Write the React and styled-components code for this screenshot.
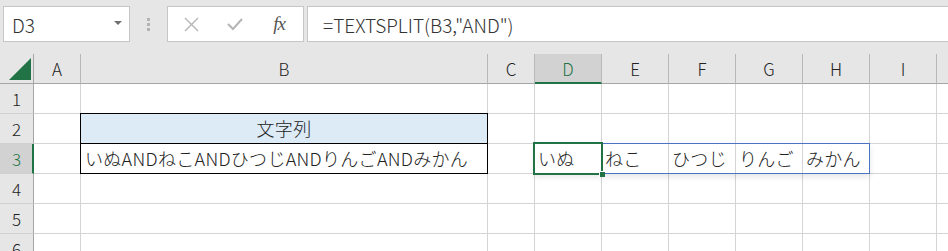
import React from 'react';
import styled, { createGlobalStyle } from 'styled-components';

const GREEN = '#217346';

const GlobalStyle = createGlobalStyle`
  html, body {
    margin: 0;
    padding: 0;
    background: #ffffff;
  }
  body {
    width: 948px;
    height: 251px;
    overflow: hidden;
    font-family: "Noto Sans CJK JP", "Noto Sans", sans-serif;
    font-weight: 300;
    color: #222222;
  }
`;

// Formula bar
const Toolbar = styled.div`
  display: flex;
  align-items: flex-start;
  box-sizing: border-box;
  height: 54px;
  padding: 6px 0 0 3px;
  background: #e6e6e6;
`;

const Box = styled.div`
  box-sizing: border-box;
  height: 36px;
  background: #ffffff;
  border: 1px solid #c6c6c6;
  display: flex;
  align-items: center;
`;

const NameBox = styled(Box)`
  width: 127px;
  padding: 0 7px 0 8px;
  justify-content: space-between;
  font-size: 19px;
  color: #333333;
`;

const DropArrow = styled.span`
  width: 0;
  height: 0;
  border-left: 4px solid transparent;
  border-right: 4px solid transparent;
  border-top: 4px solid #707070;
  margin-top: -2px;
`;

const Grip = styled.div`
  width: 37px;
  height: 36px;
  display: flex;
  flex-direction: column;
  align-items: center;
  justify-content: center;
  gap: 2px;
  & > span {
    width: 3px;
    height: 3px;
    background: #b3b3b3;
  }
`;

const FxBox = styled(Box)`
  width: 137px;
  padding: 0 0 0 6px;
`;

const IconSlot = styled.div`
  width: ${p => p.$w}px;
  display: flex;
  align-items: center;
  justify-content: center;
`;

const FxLabel = styled.span`
  font-family: "Liberation Serif", "DejaVu Serif", serif;
  font-style: italic;
  font-weight: 400;
  font-size: 19px;
  color: #555555;
  letter-spacing: -1px;
`;

const FormulaBox = styled(Box)`
  flex: 1;
  margin-left: 3px;
  padding-left: 15px;
  font-size: 19px;
  color: #333333;
  border-right: none;
`;

// Sheet grid: every item is placed on its row/column explicitly
const Sheet = styled.div`
  display: grid;
  grid-template-columns: 34px 47px 407px 47px repeat(7, 67px);
  grid-auto-rows: 30px;
  background: #ffffff;
`;

const Placed = styled.div`
  box-sizing: border-box;
  grid-row: ${p => p.$r};
  grid-column: ${p => p.$c};
`;

const Corner = styled(Placed)`
  background: #e6e6e6;
  border-right: 1px solid #a6a6a6;
  border-bottom: 1px solid #a6a6a6;
  display: flex;
  align-items: flex-end;
  justify-content: flex-end;
  padding: 0 2px 3px 0;
`;

const ColHead = styled(Placed)`
  background: ${p => (p.$active ? '#d2d2d2' : '#e6e6e6')};
  color: ${p => (p.$active ? GREEN : '#222222')};
  border-right: 1px solid #b8b8b8;
  border-bottom: ${p => (p.$active ? `2px solid ${GREEN}` : '1px solid #a6a6a6')};
  display: flex;
  align-items: center;
  justify-content: center;
  font-size: 17px;
  padding-top: ${p => (p.$active ? 1 : 0)}px;
`;

const RowHead = styled(Placed)`
  background: ${p => (p.$active ? '#d2d2d2' : '#e6e6e6')};
  color: ${p => (p.$active ? GREEN : '#222222')};
  border-right: ${p => (p.$active ? `2px solid ${GREEN}` : '1px solid #a6a6a6')};
  border-bottom: 1px solid #d0d0d0;
  display: flex;
  align-items: center;
  justify-content: center;
  font-size: 17px;
  padding-left: ${p => (p.$active ? 1 : 0)}px;
`;

const Cell = styled(Placed)`
  border-right: 1px solid #d4d4d4;
  border-bottom: 1px solid #d4d4d4;
  display: flex;
  align-items: center;
  justify-content: ${p => (p.$center ? 'center' : 'flex-start')};
  padding: 0 0 1px 3px;
  font-size: 18px;
  letter-spacing: 0.3px;
  white-space: nowrap;
  color: #222222;
  background: ${p => p.$fill || 'transparent'};
`;

const FramedCell = styled(Cell)`
  border-right-color: #000000;
  border-bottom-color: #000000;
  box-shadow: ${p => (p.$top ? '-1px 0 0 #000000, 0 -1px 0 #000000, -1px -1px 0 #000000' : '-1px 0 0 #000000')};
  padding-left: ${p => (p.$center ? 0 : 4)}px;
`;

const SpillFrame = styled(Placed)`
  margin: -1px 0 0 -1px;
  border: 1px solid #4a74c2;
  box-shadow: 0 3px 6px rgba(0, 0, 0, 0.1);
  pointer-events: none;
  z-index: 2;
`;

const Selection = styled(Placed)`
  margin: -2px -1px -1px -2px;
  border: 2px solid ${GREEN};
  position: relative;
  pointer-events: none;
  z-index: 3;
`;

const FillHandle = styled.span`
  position: absolute;
  right: -4px;
  bottom: -4px;
  width: 5px;
  height: 5px;
  background: ${GREEN};
  border: 1px solid #ffffff;
  border-width: 1px 0 0 1px;
`;

const COLUMNS = ['A', 'B', 'C', 'D', 'E', 'F', 'G', 'H', 'I', 'J'];
const ROWS = [1, 2, 3, 4, 5, 6];
const SPILL = ['いぬ', 'ねこ', 'ひつじ', 'りんご', 'みかん'];

const CancelIcon = () => (
  <svg width="15" height="15" viewBox="0 0 15 15">
    <path d="M1 1 L14 14 M14 1 L1 14" stroke="#b5b5b5" strokeWidth="1.4" fill="none" />
  </svg>
);

const CheckIcon = () => (
  <svg width="18" height="15" viewBox="0 0 18 15">
    <path d="M2 7 L7 12 L16 2" stroke="#b5b5b5" strokeWidth="2" fill="none" />
  </svg>
);

const CornerTriangle = () => (
  <svg width="22" height="22" viewBox="0 0 22 22">
    <polygon points="0,22 22,0 22,22" fill={GREEN} />
  </svg>
);

function renderCell(col, ci, row) {
  const pos = { key: `${col}${row}`, $r: row + 1, $c: ci + 2 };
  if (col === 'B' && row === 2) {
    return (
      <FramedCell {...pos} $top $center $fill="#ddebf7">
        文字列
      </FramedCell>
    );
  }
  if (col === 'B' && row === 3) {
    return <FramedCell {...pos}>いぬANDねこANDひつじANDりんごANDみかん</FramedCell>;
  }
  const idx = ci - 3;
  if (row === 3 && idx >= 0 && idx < SPILL.length) {
    return <Cell {...pos}>{SPILL[idx]}</Cell>;
  }
  return <Cell {...pos} />;
}

export default function App() {
  return (
    <>
      <GlobalStyle />
      <Toolbar>
        <NameBox>
          <span>D3</span>
          <DropArrow />
        </NameBox>
        <Grip>
          <span />
          <span />
          <span />
        </Grip>
        <FxBox>
          <IconSlot $w={34}>
            <CancelIcon />
          </IconSlot>
          <IconSlot $w={54}>
            <CheckIcon />
          </IconSlot>
          <IconSlot $w={34}>
            <FxLabel>fx</FxLabel>
          </IconSlot>
        </FxBox>
        <FormulaBox>=TEXTSPLIT(B3,"AND")</FormulaBox>
      </Toolbar>
      <Sheet>
        <Corner $r={1} $c={1}>
          <CornerTriangle />
        </Corner>
        {COLUMNS.map((c, ci) => (
          <ColHead key={c} $r={1} $c={ci + 2} $active={c === 'D'}>
            {c}
          </ColHead>
        ))}
        {ROWS.map(r => (
          <React.Fragment key={r}>
            <RowHead $r={r + 1} $c={1} $active={r === 3}>
              {r}
            </RowHead>
            {COLUMNS.map((c, ci) => renderCell(c, ci, r))}
          </React.Fragment>
        ))}
        <SpillFrame $r={4} $c="5 / 10" />
        <Selection $r={4} $c={5}>
          <FillHandle />
        </Selection>
      </Sheet>
    </>
  );
}
